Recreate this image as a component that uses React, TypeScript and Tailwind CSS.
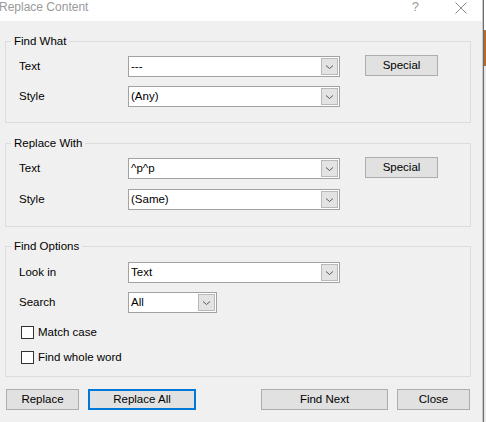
import React from "react";

const font = { fontFamily: '"Liberation Sans", Arial, sans-serif' };

function Chevron() {
  return (
    <svg width="9" height="6" viewBox="0 0 9 6" className="block">
      <path d="M1 1.5 L4.5 4.5 L8 1.5" fill="none" stroke="#5a5a5a" strokeWidth="1" />
    </svg>
  );
}

function Combo({ value, className }: { value: string; className: string }) {
  return (
    <div className={`${className} h-[21px] bg-white border border-[#a2a2a2] flex items-center`}>
      <span className="flex-1 pl-[2px] text-black leading-none truncate">{value}</span>
      <div className="w-[17px] h-[17px] mr-px bg-[#e3e3e3] border border-[#b9b9b9] flex items-center justify-center">
        <Chevron />
      </div>
    </div>
  );
}

function Btn({ label, className }: { label: string; className: string }) {
  return (
    <div
      className={`${className} h-[21px] bg-[#e1e1e1] flex items-center justify-center text-black leading-none`}
    >
      {label}
    </div>
  );
}

function Group({ title, children, className }: { title: string; children: React.ReactNode; className: string }) {
  return (
    <fieldset className={`${className} border border-[#dcdcdc] px-0`}>
      <legend className="ml-[5px] px-[3px] leading-[14px] text-black">{title}</legend>
      {children}
    </fieldset>
  );
}

function Row({ label, children, className }: { label: string; children: React.ReactNode; className: string }) {
  return (
    <div className={`${className} flex items-center`}>
      <span className="w-[109px] text-black leading-none">{label}</span>
      {children}
    </div>
  );
}

function Check({ label, className }: { label: string; className: string }) {
  return (
    <div className={`${className} flex items-center`}>
      <div className="w-[13px] h-[13px] bg-white border border-[#333333]" />
      <span className="ml-[4px] text-black leading-none">{label}</span>
    </div>
  );
}

export default function App() {
  return (
    <div className="w-[486px] h-[422px] flex bg-[#f0f0f0] overflow-hidden text-[11.5px]" style={font}>
      <div className="w-[482px] h-full flex flex-col bg-[#f0f0f0]">
        {/* title bar */}
        <div className="h-[21px] bg-white flex items-start pt-[1px] shrink-0">
          <span className="text-[12px] text-[#9a9a9a] leading-[12px] -ml-px">Replace Content</span>
          <span className="ml-auto text-[13px] text-[#9a9a9a] leading-[12px] mr-[36px]">?</span>
          <svg width="12" height="12" viewBox="0 0 12 12" className="mr-[15px] mt-px">
            <path d="M0.5 0.5 L11.5 11.5 M11.5 0.5 L0.5 11.5" stroke="#8a8a8a" strokeWidth="1" />
          </svg>
        </div>

        <div className="flex-1 pl-[5px] pr-[11px] pt-[13px]">
          <Group title="Find What" className="h-[89px]">
            <div className="pl-[13px] pt-[8px]">
              <Row label="Text" className="">
                <Combo value="---" className="w-[212px]" />
                <Btn label="Special" className="ml-[25px] w-[73px] border border-[#adadad] -mt-[2px]" />
              </Row>
              <Row label="Style" className="mt-[9px]">
                <Combo value="(Any)" className="w-[212px]" />
              </Row>
            </div>
          </Group>

          <Group title="Replace With" className="mt-[13px] h-[91px]">
            <div className="pl-[13px] pt-[8px]">
              <Row label="Text" className="">
                <Combo value="^p^p" className="w-[212px]" />
                <Btn label="Special" className="ml-[25px] w-[73px] border border-[#adadad] -mt-[2px]" />
              </Row>
              <Row label="Style" className="mt-[10px]">
                <Combo value="(Same)" className="w-[212px]" />
              </Row>
            </div>
          </Group>

          <Group title="Find Options" className="mt-[12px] h-[138px]">
            <div className="pl-[13px] pt-[9px]">
              <Row label="Look in" className="">
                <Combo value="Text" className="w-[212px]" />
              </Row>
              <Row label="Search" className="mt-[9px]">
                <Combo value="All" className="w-[89px]" />
              </Row>
              <Check label="Match case" className="mt-[13px] ml-[2px]" />
              <Check label="Find whole word" className="mt-[12px] ml-[2px]" />
            </div>
          </Group>

          <div className="mt-[12px] flex items-center">
            <Btn label="Replace" className="ml-px w-[73px] border border-[#adadad]" />
            <Btn label="Replace All" className="ml-[9px] w-[108px] border-2 border-[#0078d7]" />
            <Btn label="Find Next" className="ml-[65px] w-[127px] border border-[#adadad]" />
            <Btn label="Close" className="ml-[9px] w-[73px] border border-[#adadad]" />
          </div>
        </div>
      </div>
      <div className="w-px h-full bg-[#c8c8c8]" />
      <div className="w-px h-full bg-[#6d6d6d]" />
      <div className="flex-1 h-full flex flex-col bg-[#f3f3f3]">
        <div className="h-[30px] bg-white" />
        <div className="h-[36px] bg-[#b86a2a]" />
        <div className="flex-1 bg-[#e8e8e8]" />
      </div>
    </div>
  );
}
